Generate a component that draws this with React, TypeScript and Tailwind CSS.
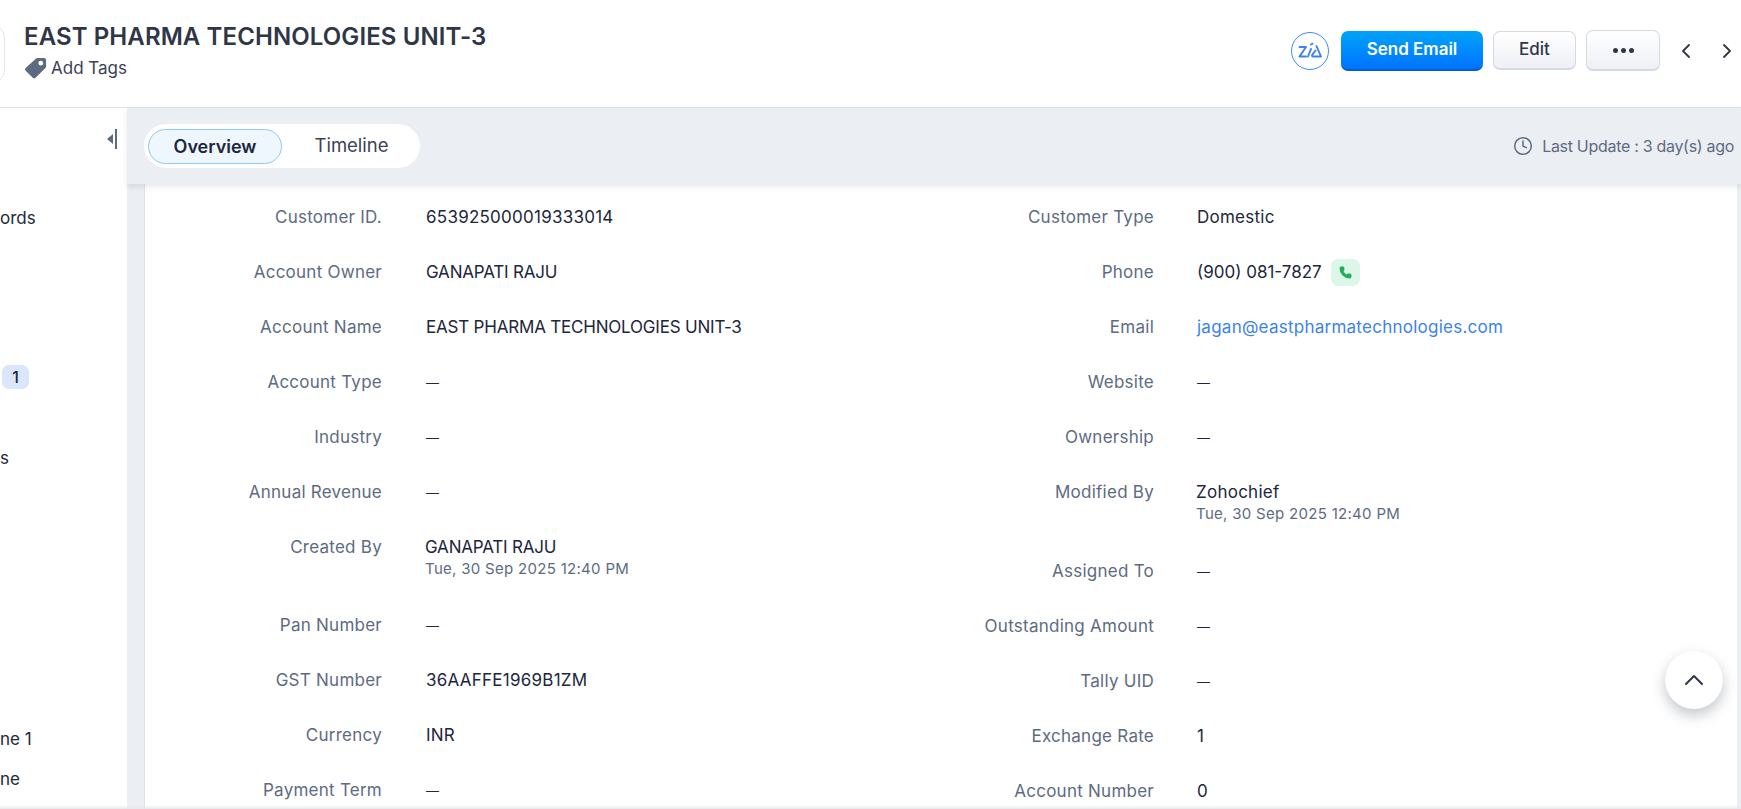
import { ChevronLeft, ChevronRight, ChevronUp, Phone, Clock } from 'lucide-react';

type Field = { label: string; value: string; sub?: string; kind?: 'phone' | 'email' | 'caps'; h?: string };

const leftFields: Field[] = [
  { label: 'Customer ID.', value: '653925000019333014' },
  { label: 'Account Owner', value: 'GANAPATI RAJU', kind: 'caps' },
  { label: 'Account Name', value: 'EAST PHARMA TECHNOLOGIES UNIT-3', kind: 'caps' },
  { label: 'Account Type', value: '—' },
  { label: 'Industry', value: '—' },
  { label: 'Annual Revenue', value: '—' },
  { label: 'Created By', value: 'GANAPATI RAJU', kind: 'caps', sub: 'Tue, 30 Sep 2025 12:40 PM', h: 'h-[78px]' },
  { label: 'Pan Number', value: '—' },
  { label: 'GST Number', value: '36AAFFE1969B1ZM' },
  { label: 'Currency', value: 'INR' },
  { label: 'Payment Term', value: '—' },
];

const rightFields: Field[] = [
  { label: 'Customer Type', value: 'Domestic' },
  { label: 'Phone', value: '(900) 081-7827', kind: 'phone' },
  { label: 'Email', value: 'jagan@eastpharmatechnologies.com', kind: 'email' },
  { label: 'Website', value: '—' },
  { label: 'Ownership', value: '—' },
  { label: 'Modified By', value: 'Zohochief', sub: 'Tue, 30 Sep 2025 12:40 PM', h: 'h-[79px]' },
  { label: 'Assigned To', value: '—' },
  { label: 'Outstanding Amount', value: '—' },
  { label: 'Tally UID', value: '—' },
  { label: 'Exchange Rate', value: '1' },
  { label: 'Account Number', value: '0' },
];

function FieldValue({ field }: { field: Field }) {
  if (field.value === '—') return <span className="text-[13px] tracking-normal">—</span>;
  if (field.kind === 'email') return <span className="text-[#3b82f0]">{field.value}</span>;
  if (field.kind === 'caps') return <span className="tracking-[-0.2px]">{field.value}</span>;
  if (field.kind === 'phone') {
    return (
      <span className="flex h-[22px] items-center gap-[9px] tracking-normal">
        {field.value}
        <span className="flex h-[27px] w-[29px] items-center justify-center rounded-[7px] bg-[#dcf6ea]">
          <Phone size={13} className="fill-[#1fae54] text-[#1fae54]" />
        </span>
      </span>
    );
  }
  return <>{field.value}</>;
}

function FieldRow({ field, valueMargin }: { field: Field; valueMargin: string }) {
  return (
    <div className={`flex ${field.h ?? 'h-[55px]'}`}>
      <div className="w-[237px] text-right text-[17px] leading-[22px] tracking-[0.25px] text-[#5d6b82]">{field.label}</div>
      <div className={`${valueMargin} ${field.sub ? '-translate-x-px' : ''} text-[17px] leading-[22px] tracking-[0.25px] text-[#21263c]`}>
        <FieldValue field={field} />
        {field.sub && <div className="mt-[1px] text-[15px] leading-[19px] tracking-[0.3px] text-[#5d6b82]">{field.sub}</div>}
      </div>
    </div>
  );
}

export default function App() {
  return (
    <div className="relative flex h-[809px] w-[1741px] flex-col overflow-hidden bg-white font-['Inter',sans-serif]">
      <header className="flex h-[108px] shrink-0 items-center border-b border-[#dde1e9] bg-white">
        <div className="-ml-[60px] h-[60px] w-[65px] rounded-[14px] border border-[#e3e6ec]" />
        <div className="ml-[19px] -mt-[6px]">
          <h1 className="text-[24px] font-semibold leading-[30px] tracking-[0.1px] text-[#2f3647]">EAST PHARMA TECHNOLOGIES UNIT-3</h1>
          <div className="mt-[4px] flex items-center gap-[4px] text-[17px] leading-[22px] text-[#3a4256]">
            <svg width="23" height="24" viewBox="0 0 24 24" className="shrink-0">
              <path
                fillRule="evenodd"
                fill="#5d6b82"
                d="M14 1.5h7a2 2 0 0 1 2 2v7a2 2 0 0 1-.6 1.4L12 22.3a2 2 0 0 1-2.8 0l-7.5-7.5a2 2 0 0 1 0-2.8L12.6 2.1A2 2 0 0 1 14 1.5zM17.5 4.5a2.5 2.5 0 1 0 0 5 2.5 2.5 0 0 0 0-5z"
              />
            </svg>
            Add Tags
          </div>
        </div>
        <div className="ml-auto mr-[2px] -mt-[6px] flex items-center">
          <div className="flex h-[38px] w-[38px] items-center justify-center rounded-full border border-[#3b8df5]">
            <svg width="24" height="17" viewBox="0 0 24 17" fill="none" stroke="#3b82f0" strokeWidth="1.9" strokeLinejoin="round" strokeLinecap="round">
              <path d="M1.5 5h6.5l-6.5 9.5h6.5" />
              <path d="M10 14.5l3-7.5" />
              <path d="M13 2.5l1.5-.8" />
              <path d="M18.5 4l4.5 10.5h-7.5c-1.5 0-2-1-1-2.2l3-3.8" />
            </svg>
          </div>
          <button className="ml-[12px] h-[40px] w-[142px] rounded-[7px] border-b-2 border-[#0061cf] bg-gradient-to-b from-[#00a3f7] to-[#0072ff] text-[17px] font-semibold text-white">
            Send Email
          </button>
          <button className="ml-[10px] h-[39px] w-[83px] rounded-[7px] border border-[#d5d9e3] border-b-2 bg-gradient-to-b from-white to-[#eef0f6] text-[17px] font-medium text-[#2f3647]">
            Edit
          </button>
          <button className="ml-[10px] flex h-[41px] w-[74px] items-center justify-center gap-[3px] rounded-[7px] border border-[#d5d9e3] border-b-2 bg-gradient-to-b from-white to-[#eef0f6]">
            <span className="h-[5px] w-[5px] rounded-full bg-[#2f3647]" />
            <span className="h-[5px] w-[5px] rounded-full bg-[#2f3647]" />
            <span className="h-[5px] w-[5px] rounded-full bg-[#2f3647]" />
          </button>
          <ChevronLeft size={24} strokeWidth={1.8} className="ml-[14px] text-[#2f3647]" />
          <ChevronRight size={24} strokeWidth={1.8} className="ml-[17px] text-[#2f3647]" />
        </div>
      </header>

      <div className="flex min-h-0 flex-1">
        <aside className="relative w-[127px] shrink-0 overflow-hidden bg-white text-[17px] leading-[22px] text-[#21263c]">
          <div className="mt-[21px] flex justify-end pr-[10px]">
            <div className="flex items-center gap-[2px]">
              <span className="h-0 w-0 border-y-[5px] border-r-[6px] border-y-transparent border-r-[#5d6b82]" />
              <span className="h-[20px] w-[2px] bg-[#5d6b82]" />
            </div>
          </div>
          <div className="mt-[58px] whitespace-nowrap">ords</div>
          <div className="mt-[136px] ml-[2px] flex h-[24px] w-[27px] items-center justify-center rounded-[7px] bg-[#dbe6fd] text-[16px] font-medium">1</div>
          <div className="mt-[58px] whitespace-nowrap">s</div>
          <div className="mt-[259px] whitespace-nowrap">ne 1</div>
          <div className="mt-[18px] whitespace-nowrap">ne</div>
        </aside>

        <main className="flex min-w-0 flex-1 flex-col bg-[#ebeef3]">
          <div className="z-10 flex h-[76px] shrink-0 items-center bg-[#ebeef3] pl-[17px] pr-[7px] shadow-[0_3px_5px_rgba(40,50,70,0.1)]">
            <div className="flex h-[44px] w-[276px] items-center rounded-full bg-white px-[4px]">
              <div className="flex h-[35px] w-[134px] items-center justify-center rounded-full border border-[#8ccaf5] bg-[#eef7fe] text-[18px] font-semibold text-[#21263c]">
                Overview
              </div>
              <div className="flex-1 pl-[5px] text-center text-[18.5px] text-[#3a4256]">Timeline</div>
            </div>
            <div className="ml-auto flex items-center gap-[9px] text-[16px] tracking-[-0.3px] text-[#5d6b82]">
              <Clock size={20} strokeWidth={1.8} />
              Last Update : 3 day(s) ago
            </div>
          </div>
          <section className="ml-[17px] mr-[4px] flex-1 overflow-hidden border-l border-[#dde1e9] bg-white pt-[22px]">
            <div className="grid grid-cols-[772px_1fr]">
              <div>
                {leftFields.map((f) => (
                  <FieldRow key={f.label} field={f} valueMargin="ml-[44px]" />
                ))}
              </div>
              <div>
                {rightFields.map((f) => (
                  <FieldRow key={f.label} field={f} valueMargin="ml-[43px]" />
                ))}
              </div>
            </div>
          </section>
        </main>
      </div>

      <div className="pointer-events-none absolute inset-x-0 bottom-0 h-[4px] bg-gradient-to-b from-transparent to-[#e6e8ec]" />
      <button className="absolute left-[1665px] top-[651px] flex h-[58px] w-[58px] items-center justify-center rounded-full bg-white shadow-[0_6px_14px_rgba(40,50,70,0.28)]">
        <ChevronUp size={32} strokeWidth={1.5} className="text-[#2f3647]" />
      </button>
    </div>
  );
}
